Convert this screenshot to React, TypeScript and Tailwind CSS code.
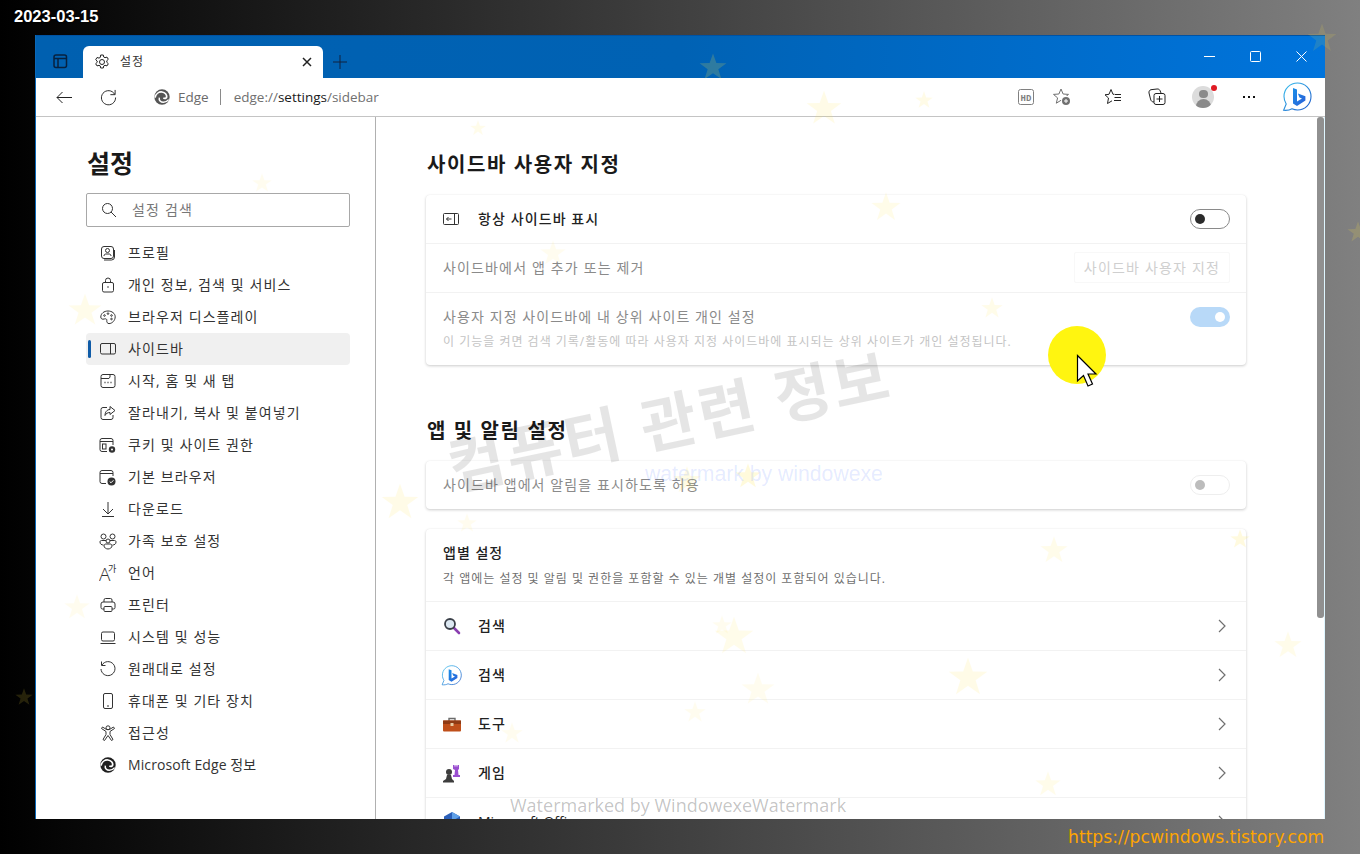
import React from "react";

const S = ({ children, size = 16, vb = 16, className = "" }: { children: React.ReactNode; size?: number; vb?: number; className?: string }) => (
  <svg width={size} height={size} viewBox={`0 0 ${vb} ${vb}`} fill="none" stroke="#333" strokeWidth="1" className={"shrink-0 " + className}>
    {children}
  </svg>
);

const EdgeLogo = ({ size = 16, color = "#1f1f1f" }: { size?: number; color?: string }) => (
  <svg width={size} height={size} viewBox="0 0 24 24" className="shrink-0">
    <circle cx="12" cy="12" r="11.5" fill={color} />
    <path d="M1.500 13C3 6.500 8 4 12 4.500c4.500.5 7.500 4 7 7.500-.4 2.200-3 2.600-5 1.600" fill="none" stroke="#fff" strokeWidth="2.600" />
    <path d="M8 13c-1 4 2 7 6 7 3 0 6-1.500 8-4" fill="none" stroke="#fff" strokeWidth="2.200" />
  </svg>
);

const BingLogo = ({ size = 30 }: { size?: number }) => (
  <svg width={size} height={size} viewBox="0 0 30 30" className="shrink-0">
    <defs>
      <linearGradient id="bb" x1="0" y1="0" x2="1" y2="1">
        <stop offset="0" stopColor="#1b8fe8" />
        <stop offset="1" stopColor="#2a5fd8" />
      </linearGradient>
      <linearGradient id="bc" x1="0" y1="0" x2="1" y2="1">
        <stop offset="0" stopColor="#38c0ee" />
        <stop offset="1" stopColor="#1a56c8" />
      </linearGradient>
    </defs>
    <path d="M15.500 1C8 1 2 7 2 14.500c0 3 1 5.500 2.200 7.500L1.600 28.300c3.400.3 6.200-.2 8.400-1.500 1.600.7 3.500 1.200 5.500 1.200C23 28 29 22 29 14.500S23 1 15.500 1z" fill="#fff" stroke="url(#bc)" strokeWidth="1.100" />
    <path d="M11 6l4 1.400v12l5-2.800-2.500-1.200-1.600-3.800 7.500 2.600v4.200L15 24l-4-2.400z" fill="url(#bb)" />
  </svg>
);

const icons: Record<string, React.ReactNode> = {
  profile: (
    <S>
      <rect x="1.500" y="1.500" width="12" height="12" rx="2.500" />
      <path d="M14.500 5v7a3 3 0 0 1-3 3H4" />
      <circle cx="7.500" cy="5.500" r="2" />
      <path d="M4 11c0-1.500 1-2 2-2h3c1 0 2 .5 2 2" />
    </S>
  ),
  lock: (
    <S>
      <rect x="2.500" y="5.500" width="11" height="9.500" rx="1.500" />
      <path d="M5.500 5.500V3.500a2.500 2.500 0 0 1 5 0v2" />
      <circle cx="8" cy="10" r=".8" fill="#333" stroke="none" />
    </S>
  ),
  palette: (
    <S>
      <path d="M8 2C4 2 .8 4.500.8 8c0 1.500 1 2.200 2.200 2.200.9 0 1.800-.5 2.600-.4 1 .1 1.300.9 1.200 1.800-.2 1.600.6 3 2.200 3 3 0 6.200-3 6.200-6.800C15.200 4.500 12 2 8 2z" />
      <circle cx="4.500" cy="6.500" r=".8" /><circle cx="8" cy="4.600" r=".8" /><circle cx="11.500" cy="6.500" r=".8" /><circle cx="11.500" cy="10" r=".8" />
    </S>
  ),
  sidebar: (
    <S>
      <rect x=".5" y="2.500" width="15" height="10.500" rx="1.500" />
      <path d="M10.500 2.500V13" />
    </S>
  ),
  start: (
    <S>
      <rect x="1" y="1.500" width="14" height="13" rx="2" />
      <path d="M1 5.500h8l1-1.500V1.500" />
      <path d="M4.500 9.500h1M7.500 9.500h1M10.500 9.500h1" strokeWidth="1.300" />
    </S>
  ),
  share: (
    <S>
      <path d="M7 2.500H3a2 2 0 0 0-2 2v8a2 2 0 0 0 2 2h8a2 2 0 0 0 2-2V10" />
      <path d="M10 1.500l5 4-5 4V7.500c-2.500 0-4 1-5 3 0-3.500 2-6 5-6z" />
    </S>
  ),
  cookie: (
    <svg width="18" height="17" viewBox="0 0 18 17" fill="none" stroke="#333" className="shrink-0">
      <path d="M8 14.500H3a2 2 0 0 1-2-2v-9a2 2 0 0 1 2-2h9a2 2 0 0 1 2 2V8" />
      <path d="M1 4.500h13" /><rect x="3.500" y="7" width="3.500" height="5" />
      <circle cx="13" cy="12.500" r="3.200" fill="#333" stroke="none" />
      <circle cx="13" cy="12.500" r="1" fill="#fff" stroke="none" />
    </svg>
  ),
  browser: (
    <svg width="18" height="17" viewBox="0 0 18 17" fill="none" stroke="#333" className="shrink-0">
      <path d="M7 14.500H3a2 2 0 0 1-2-2v-9a2 2 0 0 1 2-2h9a2 2 0 0 1 2 2V7" />
      <path d="M1 4.500h13" />
      <circle cx="12.500" cy="12.500" r="4" fill="#333" stroke="none" />
      <path d="M10.700 12.500l1.300 1.300 2.400-2.500" stroke="#fff" />
    </svg>
  ),
  download: (
    <S>
      <path d="M8 1v11.500M3 8l5 5 5-5M2 15.500h12" />
    </S>
  ),
  family: (
    <svg width="18" height="17" viewBox="0 0 18 17" fill="none" stroke="#333" className="shrink-0">
      <circle cx="4.500" cy="3.500" r="2.500" /><circle cx="13.500" cy="3.500" r="2.500" /><circle cx="9" cy="8" r="2" />
      <path d="M7 7.500H2.500C1.500 7.500 1 8 1 9c0 2 1.500 3 3.500 3M11 7.500h4.500c1 0 1.500.5 1.500 1.500 0 2-1.500 3-3.500 3" />
      <path d="M5 13c0-1.500 1-2 2-2h4c1 0 2 .5 2 2 0 1.500-2 3-4 3s-4-1.500-4-3z" />
    </svg>
  ),
  lang: (
    <svg width="18" height="18" viewBox="0 0 18 18" className="shrink-0">
      <text x="0" y="17" fontSize="19" fill="#333" fontFamily="'Open Sans'" fontWeight="300">A</text>
      <text x="9" y="8" fontSize="9" fill="#333" fontFamily="'Noto Sans CJK KR'">가</text>
    </svg>
  ),
  printer: (
    <S>
      <path d="M4 5V3a1.500 1.500 0 0 1 1.500-1.500h5A1.500 1.500 0 0 1 12 3v2" />
      <path d="M4 12H2.500A1.500 1.500 0 0 1 1 10.500V7a2 2 0 0 1 2-2h10a2 2 0 0 1 2 2v3.500a1.500 1.500 0 0 1-1.500 1.500H12" />
      <rect x="4" y="9.500" width="8" height="5" rx="1" />
    </S>
  ),
  laptop: (
    <S>
      <rect x="1.500" y="3" width="13" height="9" rx="1.500" />
      <path d="M.5 14.500h15" />
    </S>
  ),
  reset: (
    <S>
      <path d="M2 4a7 7 0 1 1-1 4" />
      <path d="M1.500 .5V4.500h4" />
    </S>
  ),
  phone: (
    <S>
      <rect x="3.500" y=".5" width="9" height="15" rx="1.500" />
      <path d="M7 13h2" />
    </S>
  ),
  access: (
    <S>
      <circle cx="8" cy="2.800" r="2" />
      <path d="M1.500 3.500l4.500 3v3l-3 5 1.500 1 3.500-5 3.500 5 1.500-1-3-5v-3l4.500-3-1-1.500-4 2.500H6.500L2.500 2z" />
    </S>
  ),
  edge: <EdgeLogo />,
};

const nav: [string, string][] = [
  ["profile", "프로필"],
  ["lock", "개인 정보, 검색 및 서비스"],
  ["palette", "브라우저 디스플레이"],
  ["sidebar", "사이드바"],
  ["start", "시작, 홈 및 새 탭"],
  ["share", "잘라내기, 복사 및 붙여넣기"],
  ["cookie", "쿠키 및 사이트 권한"],
  ["browser", "기본 브라우저"],
  ["download", "다운로드"],
  ["family", "가족 보호 설정"],
  ["lang", "언어"],
  ["printer", "프린터"],
  ["laptop", "시스템 및 성능"],
  ["reset", "원래대로 설정"],
  ["phone", "휴대폰 및 기타 장치"],
  ["access", "접근성"],
  ["edge", "Microsoft Edge 정보"],
];

const Chevron = () => (
  <svg width="8" height="14" viewBox="0 0 8 14" fill="none" stroke="#707070" strokeWidth="1.200" className="shrink-0">
    <path d="M1 1l6 6-6 6" />
  </svg>
);

const appIcons: Record<string, React.ReactNode> = {
  search: (
    <svg width="18" height="18" viewBox="0 0 18 18" className="shrink-0">
      <path d="M10 10l6 6" stroke="#8a3fb0" strokeWidth="2.600" strokeLinecap="round" />
      <circle cx="7" cy="7" r="5" fill="#dce8f2" stroke="#3a3f48" strokeWidth="1.800" />
    </svg>
  ),
  bing: <BingLogo size={21} />,
  tools: (
    <svg width="18" height="15" viewBox="0 0 18 15" className="shrink-0">
      <path d="M6 4V1.500h6V4" fill="none" stroke="#6b6b6b" strokeWidth="1.400" />
      <rect x="0" y="3.500" width="18" height="11" rx="1" fill="#bf4f1a" />
      <rect x="0" y="3.500" width="18" height="3.500" fill="#8f3a14" />
      <rect x="7.500" y="6" width="3" height="3" fill="#e8c9a0" />
    </svg>
  ),
  games: (
    <svg width="19" height="19" viewBox="0 0 19 19" className="shrink-0">
      <circle cx="7" cy="8" r="3" fill="#3d3d3d" />
      <path d="M5 11h4l1 4 2 2v1.500H1V17l3-2z" fill="#3d3d3d" />
      <path d="M11 1h1.500v1.500h1V1h1v1.500h1V1H17v4l-1 1 .5 5H18v2h-7v-2h1.500L13 6l-2-1z" fill="#9a4fd0" />
    </svg>
  ),
  office: (
    <svg width="18" height="20" viewBox="0 0 18 20" className="shrink-0">
      <path d="M9 0l8 4.500v10L9 19 1 14.500v-10z" fill="#2b5fb8" />
      <path d="M9 0l8 4.500L9 9z" fill="#5fa0e8" />
    </svg>
  ),
};

const apps: [string, string][] = [
  ["search", "검색"],
  ["bing", "검색"],
  ["tools", "도구"],
  ["games", "게임"],
  ["office", "Microsoft Office"],
];

const stars: [number, number, number, number][] = [
  [1322, 38, 30, 0.12],
  [713, 67, 28, 0.18],
  [824, 108, 36, 0.12],
  [924, 100, 18, 0.12],
  [478, 128, 16, 0.1],
  [262, 183, 20, 0.08],
  [886, 207, 30, 0.11],
  [1358, 232, 22, 0.16],
  [553, 253, 26, 0.08],
  [992, 308, 22, 0.11],
  [85, 310, 34, 0.1],
  [687, 480, 28, 0.14],
  [748, 476, 26, 0.18],
  [400, 502, 38, 0.12],
  [467, 523, 20, 0.08],
  [1054, 550, 28, 0.1],
  [1240, 539, 20, 0.16],
  [77, 607, 26, 0.08],
  [722, 625, 20, 0.08],
  [734, 636, 40, 0.1],
  [1288, 645, 28, 0.1],
  [968, 677, 40, 0.12],
  [758, 689, 34, 0.08],
  [695, 712, 22, 0.08],
  [24, 697, 18, 0.14],
  [512, 733, 22, 0.08],
  [1048, 784, 26, 0.1],
];

const Toggle = ({ kind }: { kind: "off" | "on" | "disabled" }) => {
  if (kind === "on")
    return (
      <div className="flex h-5 w-10 items-center justify-end rounded-full bg-[#b8d9f8] pr-[5px]">
        <div className="h-[10px] w-[10px] rounded-full bg-white" />
      </div>
    );
  if (kind === "disabled")
    return (
      <div className="flex h-5 w-10 items-center rounded-full border border-[#eeeeee] pl-[4px]">
        <div className="h-[10px] w-[10px] rounded-full bg-[#bcbcbc]" />
      </div>
    );
  return (
    <div className="flex h-5 w-10 items-center rounded-full border border-[#8a8a8a] pl-[4px]">
      <div className="h-[10px] w-[10px] rounded-full bg-[#2b2b2b]" />
    </div>
  );
};

const cardCls = "w-[820px] rounded-[4px] bg-white shadow-[0_1px_3px_rgba(0,0,0,0.2),0_0_1px_rgba(0,0,0,0.06)]";

export default function App() {
  return (
    <div className="relative h-[854px] w-[1360px] overflow-hidden bg-[linear-gradient(90deg,#000_0%,#808080_100%)] [font-family:'Open_Sans','Noto_Sans_CJK_KR',sans-serif]">
      <div className="flex h-[35px] items-start pl-[14px] pt-[6px] text-[16.500px] leading-[20px] font-bold text-white [font-family:'Liberation_Sans',sans-serif] [text-shadow:0_0_2px_#000]">
        2023-03-15
      </div>

      <div className="ml-[35px] flex h-[784px] w-[1290px] flex-col overflow-hidden border-l border-[#0a68b8] bg-white">
        {/* title bar */}
        <div className="flex h-[43px] shrink-0 items-end border-t border-[#0052a3] bg-[linear-gradient(90deg,#0060b0_0%,#0062b4_50%,#0074dc_100%)]">
          <div className="flex h-[32px] w-[47px] shrink-0 items-center justify-center pb-[2px]">
            <svg width="16" height="16" viewBox="0 0 16 16" fill="none" stroke="#07213f" strokeWidth="1.500">
              <rect x="2" y="2" width="12.500" height="12.500" rx="2" />
              <path d="M2 5.500h12.500M6 5.500v9" />
            </svg>
          </div>
          <div className="flex h-[32px] w-[240px] shrink-0 items-center rounded-t-[6px] bg-white pl-[11px] pr-[11px]">
            <svg width="16" height="16" viewBox="0 0 16 16" fill="none" stroke="#222" className="shrink-0">
              <circle cx="8" cy="8" r="2.500" />
              <path d="M6.700 1h2.600l.4 2 1.300.7 2-.6 1.300 2.200-1.500 1.400v1.600l1.500 1.400-1.300 2.200-2-.6-1.300.7-.4 2H6.700l-.4-2-1.300-.7-2 .6-1.300-2.200 1.500-1.400V7.100L1.700 5.700 3 3.500l2 .6 1.300-.7z" />
            </svg>
            <span className="ml-[10px] flex-1 text-[12px] leading-none tracking-[1px] text-[#333]">설정</span>
            <svg width="10" height="10" viewBox="0 0 10 10" stroke="#222" strokeWidth="1.500">
              <path d="M1 1l8 8M9 1l-8 8" />
            </svg>
          </div>
          <div className="flex h-[32px] w-[34px] items-center justify-center">
            <svg width="14" height="14" viewBox="0 0 14 14" stroke="#10233f">
              <path d="M7 0v14M0 7h14" />
            </svg>
          </div>
          <div className="ml-auto flex h-[42px] items-center pb-[2px]">
            <div className="flex w-[46px] justify-center pl-[1px]">
              <svg width="11" height="11" viewBox="0 0 11 11" stroke="#fff"><path d="M0 5.500h11" /></svg>
            </div>
            <div className="flex w-[46px] justify-center">
              <svg width="11" height="11" viewBox="0 0 11 11" fill="none" stroke="#fff"><rect x=".5" y=".5" width="10" height="10" rx="1" /></svg>
            </div>
            <div className="flex w-[46px] justify-center">
              <svg width="11" height="11" viewBox="0 0 11 11" stroke="#fff"><path d="M.5.500l10 10M10.500.500l-10 10" /></svg>
            </div>
          </div>
          <div className="w-[1px]" />
        </div>

        {/* toolbar */}
        <div className="flex h-[39px] shrink-0 items-center border-b border-[#c4c4c4] bg-white">
          <div className="flex w-[56px] justify-center">
            <svg width="16" height="13" viewBox="0 0 16 13" fill="none" stroke="#222"><path d="M16 6.500H1M6.500 1L1 6.500 6.500 12" /></svg>
          </div>
          <div className="flex w-[32px] justify-center">
            <svg width="17" height="17" viewBox="0 0 18 18" fill="none" stroke="#222"><path d="M15.500 5.500A7.500 7.500 0 1 0 16.500 9" /><path d="M16 1v5h-5" /></svg>
          </div>
          <div className="ml-[30px]"><EdgeLogo color="#555" /></div>
          <span className="ml-[8px] text-[13.500px] text-[#6a6a6a]">Edge</span>
          <div className="ml-[11px] h-[16px] w-px bg-[#8a8a8a]" />
          <span className="ml-[13px] text-[13.500px] text-[#707070]">
            edge://<span className="text-[#1a1a1a]">settings</span>/sidebar
          </span>
          <div className="ml-auto flex items-center">
            <div className="flex w-[36px] justify-center">
              <svg width="16" height="16" viewBox="0 0 16 16" fill="none" stroke="#808080">
                <rect x=".5" y=".5" width="15" height="15" rx="2" />
                <text x="8" y="11.500" textAnchor="middle" fontSize="9" fontWeight="700" fill="#808080" stroke="none" fontFamily="'Liberation Mono'">HD</text>
              </svg>
            </div>
            <div className="flex w-[36px] justify-center">
              <svg width="18" height="18" viewBox="0 0 18 18" fill="none" stroke="#707070">
                <path d="M8 1l2.100 5 5.400.4-4.100 3.500 1.300 5.300L8 12.300l-4.700 2.900 1.300-5.300L.5 6.400 5.900 6z" />
                <circle cx="13" cy="13" r="5" fill="#fff" stroke="none" />
                <circle cx="13" cy="13" r="4" fill="#707070" stroke="none" />
                <path d="M13 11v4M11 13h4" stroke="#fff" />
              </svg>
            </div>
            <div className="ml-[15px] flex w-[36px] justify-center">
              <svg width="18" height="18" viewBox="0 0 18 18" fill="none" stroke="#222">
                <path d="M7 1.500L9 6.300h1.500M7 1.500L5 6.300l-4 .5L4.500 10l-1 5.500 4.500-2.700" />
                <path d="M11 6.500h6M10.500 9.500H17M10 12.500h7" />
              </svg>
            </div>
            <div className="ml-[8px] flex w-[36px] justify-center">
              <svg width="18" height="18" viewBox="0 0 18 18" fill="none" stroke="#222">
                <path d="M6 14c-2 0-3-1-3.500-3L1 5c-.300-1.500.5-3 2-3.300L9 1c1.500-.2 2.500.5 3 1.500L13 5" />
                <rect x="6" y="5.500" width="11" height="11" rx="2" />
                <path d="M11.500 8v6M8.500 11h6" />
              </svg>
            </div>
            <div className="relative ml-[10px] flex w-[36px] justify-center">
              <div className="flex h-[22px] w-[22px] flex-col items-center overflow-hidden rounded-full bg-[#dcdcdc]">
                <div className="mt-[4px] h-[9px] w-[9px] rounded-full bg-[#8a8a8a]" />
                <div className="mt-[1px] h-[10px] w-[15px] rounded-t-full bg-[#8a8a8a]" />
              </div>
              <div className="absolute right-[4px] top-[-1px] h-[6px] w-[6px] rounded-full bg-[#e01b24]" />
            </div>
            <div className="ml-[10px] flex w-[36px] justify-center gap-[3px]">
              <div className="h-[2px] w-[2px] bg-[#111]" />
              <div className="h-[2px] w-[2px] bg-[#111]" />
              <div className="h-[2px] w-[2px] bg-[#111]" />
            </div>
            <div className="ml-[14px] mr-[12px] flex w-[32px] justify-center">
              <BingLogo />
            </div>
          </div>
        </div>

        {/* content */}
        <div className="flex min-h-0 flex-1">
          <aside className="w-[340px] shrink-0 border-r border-[#b0b0b0] pl-[50px]">
            <h1 className="mt-[30px] ml-[1px] h-[32px] text-[25px] leading-[32px] font-bold text-[#1a1a1a]">설정</h1>
            <div className="mt-[14px] flex h-[34px] w-[264px] items-center rounded-[2px] border border-[#a8a8a8] pl-[14px]">
              <svg width="16" height="16" viewBox="0 0 16 16" fill="none" stroke="#333"><circle cx="6.500" cy="6.500" r="5" /><path d="M10 10l5 5" /></svg>
              <span className="ml-[15px] mb-[2px] text-[14px] tracking-[1.200px] text-[#777]">설정 검색</span>
            </div>
            <nav className="mt-[10px] w-[264px]">
              {nav.map(([ic, label]) => {
                const active = label === "사이드바";
                return (
                  <div key={label} className={"relative flex h-[32px] items-center rounded-[4px] " + (active ? "bg-[#f0f0f0]" : "")}>
                    {active && <div className="absolute left-[2px] top-[7px] h-[18px] w-[3px] rounded-full bg-[#0f5ba7]" />}
                    <div className="flex w-[42px] shrink-0 justify-center pl-[2px]">{icons[ic]}</div>
                    <span className={"text-[14px] leading-none text-[#333] " + (ic === "edge" ? "tracking-[0.100px]" : "tracking-[1.100px]")}>{label}</span>
                  </div>
                );
              })}
            </nav>
          </aside>

          <main className="min-w-0 flex-1 overflow-hidden pl-[50px]">
            <h2 className="mt-[34px] ml-[1px] h-[28px] text-[20px] leading-[28px] tracking-[1.600px] font-bold text-[#1a1a1a]">사이드바 사용자 지정</h2>
            <section className={"mt-[16px] " + cardCls}>
              <div className="flex h-[49px] items-center border-b border-[#f2f2f2] pl-[17px] pr-[16px]">
                <svg width="16" height="12" viewBox="0 0 16 12" fill="none" stroke="#333" className="shrink-0">
                  <rect x=".5" y=".5" width="15" height="11" rx="1" />
                  <path d="M11.500.500v11M8.500 6H3.500M5.500 4l-2 2 2 2" />
                </svg>
                <span className="ml-[19px] mb-[1px] flex-1 text-[14px] font-medium tracking-[1.100px] text-[#222]">항상 사이드바 표시</span>
                <Toggle kind="off" />
              </div>
              <div className="flex h-[49px] items-center border-b border-[#f2f2f2] pl-[17px] pr-[16px]">
                <span className="mb-[1px] flex-1 text-[14px] tracking-[1.150px] text-[#8a8a8a]">사이드바에서 앱 추가 또는 제거</span>
                <div className="mb-[1px] flex h-[31px] w-[156px] items-center justify-center rounded-[2px] border border-[#f8f8f8] text-[14px] tracking-[1.200px] text-[#cfcfcf]">사이드바 사용자 지정</div>
              </div>
              <div className="flex h-[72px] items-start pl-[17px] pr-[16px] pt-[14px]">
                <div className="flex-1">
                  <div className="text-[14px] leading-[20px] tracking-[1.100px] text-[#8a8a8a]">사용자 지정 사이드바에 내 상위 사이트 개인 설정</div>
                  <div className="mt-[7px] text-[12px] leading-[16px] tracking-[1px] text-[#c4c4c4]">이 기능을 켜면 검색 기록/활동에 따라 사용자 지정 사이드바에 표시되는 상위 사이트가 개인 설정됩니다.</div>
                </div>
                <Toggle kind="on" />
              </div>
            </section>

            <h2 className="mt-[52px] ml-[1px] h-[28px] text-[20px] leading-[28px] tracking-[1.600px] font-bold text-[#1a1a1a]">앱 및 알림 설정</h2>
            <section className={"mt-[16px] flex h-[48px] items-center pl-[17px] pr-[16px] " + cardCls}>
              <span className="mb-[1px] flex-1 text-[14px] tracking-[1.100px] text-[#8a8a8a]">사이드바 앱에서 알림을 표시하도록 허용</span>
              <Toggle kind="disabled" />
            </section>

            <section className={"mt-[20px] " + cardCls}>
              <div className="h-[73px] border-b border-[#f2f2f2] pl-[17px] pt-[14px]">
                <div className="text-[14px] leading-[20px] font-medium tracking-[1px] text-[#222]">앱별 설정</div>
                <div className="mt-[8px] text-[12px] leading-[16px] tracking-[1px] text-[#707070]">각 앱에는 설정 및 알림 및 권한을 포함할 수 있는 개별 설정이 포함되어 있습니다.</div>
              </div>
              {apps.map(([ic, label]) => (
                <div key={ic + label} className="flex h-[49px] items-center border-b border-[#f2f2f2] pl-[15px] pr-[20px]">
                  <div className="flex w-[21px] justify-center">{appIcons[ic]}</div>
                  <span className={"ml-[16px] mb-[1px] flex-1 text-[14px] font-medium text-[#222] " + (ic === "office" ? "" : "tracking-[1.100px]")}>{label}</span>
                  <Chevron />
                </div>
              ))}
            </section>
          </main>

          <div className="w-[8px] shrink-0 border-r border-[#dff6ff]">
            <div className="h-[501px] rounded-[3px] bg-[#909090]" />
          </div>
        </div>
      </div>

      {/* stars overlay */}
      {stars.map(([x, y, s, o]) => (
        <svg key={x + "-" + y} className="pointer-events-none absolute" style={{ left: x - s / 2, top: y - s / 2, opacity: o }} width={s} height={s} viewBox="0 0 100 100">
          <polygon points="50,2 62,36 98,37 69,58 80,93 50,72 20,93 31,58 2,37 38,36" fill="#ffe640" />
        </svg>
      ))}

      {/* watermarks */}
      <div className="pointer-events-none absolute left-[444px] top-[385px] rotate-[-12deg] text-[61px] leading-[72px] font-bold tracking-[3px] whitespace-nowrap text-[rgba(0,0,0,0.1)]">컴퓨터 관련 정보</div>
      <div className="pointer-events-none absolute left-[645px] top-[461px] text-[21.200px] leading-[26px] whitespace-nowrap text-[rgba(70,110,255,0.14)] [font-family:'Liberation_Sans',sans-serif]">watermark by windowexe</div>
      <div className="pointer-events-none absolute left-[510px] top-[792px] text-[18px] leading-[26px] whitespace-nowrap text-[rgba(0,0,0,0.24)] [font-family:'Open_Sans',sans-serif]">Watermarked by WindowexeWatermark</div>
      <div className="pointer-events-none absolute left-[1068px] top-[825px] text-[17.200px] leading-[24px] whitespace-nowrap text-[#ffa500] [font-family:'DejaVu_Sans',sans-serif]">https://pcwindows.tistory.com</div>

      {/* cursor */}
      <div className="pointer-events-none absolute left-[1048px] top-[326px] h-[58px] w-[58px] rounded-full bg-[#fff510]" />
      <svg className="pointer-events-none absolute left-[1076px] top-[354px]" width="22" height="34" viewBox="0 0 22 34">
        <path d="M1.500 1.500V27l6-5.500 4.500 10.500 4.500-2-4.500-10h8z" fill="#fff" stroke="#000" strokeWidth="1.200" />
      </svg>
    </div>
  );
}
